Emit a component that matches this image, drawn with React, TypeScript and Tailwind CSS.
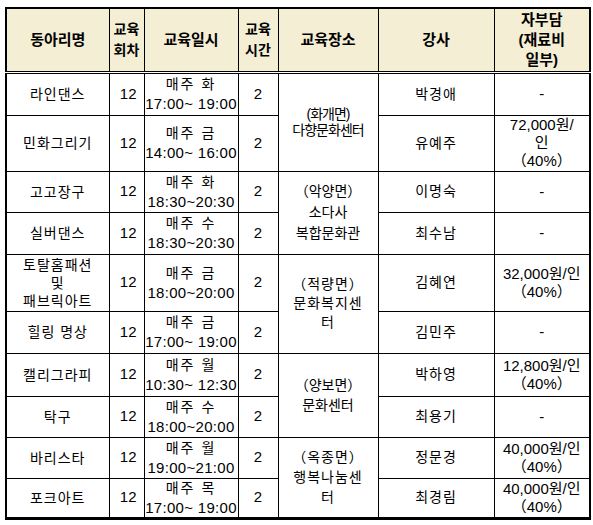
import React from 'react';

// 교육 프로그램 일정표
type Row = {
  name: string[];
  day: string;
  time: string;
  teacher: string;
  cost: string[];
  place?: { lines: string[]; cls: string };
  h: string;
};

const rows: Row[] = [
  { name: ['라인댄스'], day: '매주 화', time: '17:00~ 19:00', teacher: '박경애', cost: ['-'], h: 'h-[43px]',
    place: { lines: ['(화개면)', '다향문화센터'], cls: 'leading-[16px] tracking-[-1px]' } },
  { name: ['민화그리기'], day: '매주 금', time: '14:00~ 16:00', teacher: '유예주', cost: ['72,000원/', '인', '（40%）'], h: 'h-[56px]' },
  { name: ['고고장구'], day: '매주 화', time: '18:30~20:30', teacher: '이명숙', cost: ['-'], h: 'h-[41px]',
    place: { lines: ['（악양면）', '소다사', '복합문화관'], cls: 'leading-[21px]' } },
  { name: ['실버댄스'], day: '매주 수', time: '18:30~20:30', teacher: '최수남', cost: ['-'], h: 'h-[42px]' },
  { name: ['토탈홈패션', '및', '패브릭아트'], day: '매주 금', time: '18:00~20:00', teacher: '김혜연', cost: ['32,000원/인', '（40%）'], h: 'h-[57px]',
    place: { lines: ['（적량면）', '문화복지센', '터'], cls: 'leading-[19px] tracking-[1px]' } },
  { name: ['힐링 명상'], day: '매주 금', time: '17:00~ 19:00', teacher: '김민주', cost: ['-'], h: 'h-[42px]' },
  { name: ['캘리그라피'], day: '매주 월', time: '10:30~ 12:30', teacher: '박하영', cost: ['12,800원/인', '（40%）'], h: 'h-[43px]',
    place: { lines: ['（양보면）', '문화센터'], cls: 'leading-[20px]' } },
  { name: ['탁구'], day: '매주 수', time: '18:00~20:00', teacher: '최용기', cost: ['-'], h: 'h-[41px]' },
  { name: ['바리스타'], day: '매주 월', time: '19:00~21:00', teacher: '정문경', cost: ['40,000원/인', '（40%）'], h: 'h-[41px]',
    place: { lines: ['（옥종면）', '행복나눔센', '터'], cls: 'leading-[20px] tracking-[1px]' } },
  { name: ['포크아트'], day: '매주 목', time: '17:00~ 19:00', teacher: '최경림', cost: ['40,000원/인', '（40%）'], h: 'h-[40px]' },
];

const td = 'border border-black p-0 text-center align-middle';
const th = 'border border-black border-b-[3px] border-double p-0 text-center align-middle font-bold bg-[#f4eed5]';

export default function App() {
  return (
    <div
      className="w-[593px] h-[525px] bg-white pt-[7px] pl-[5px] text-black text-[14px]"
      style={{ fontFamily: '"Liberation Sans", "Noto Sans CJK KR", sans-serif' }}
    >
      <table className="w-[584px] table-fixed border-collapse border-2 border-b-[3px] border-black">
        <colgroup>
          <col className="w-[103px]" />
          <col className="w-[35px]" />
          <col className="w-[94px]" />
          <col className="w-[40px]" />
          <col className="w-[100px]" />
          <col className="w-[116px]" />
          <col className="w-[96px]" />
        </colgroup>
        <thead>
          <tr className="h-[64px]">
            <th className={`${th} text-[15px]`}>동아리명</th>
            <th className={`${th} leading-[21px]`}>교육<br />회차</th>
            <th className={`${th} text-[15px]`}>교육일시</th>
            <th className={`${th} leading-[21px]`}>교육<br />시간</th>
            <th className={`${th} text-[15px]`}>교육장소</th>
            <th className={`${th} text-[15px]`}>강사</th>
            <th className={`${th} leading-[20px] text-[15px]`}>자부담<br />(재료비<br />일부)</th>
          </tr>
        </thead>
        <tbody>
          {rows.map((r, i) => (
            <tr key={i} className={r.h}>
              <td className={`${td} leading-[18px] tracking-[1px]`}>
                {r.name.map((n, j) => (
                  <div key={j}>{n}</div>
                ))}
              </td>
              <td className={`${td} text-right pr-[7px] text-[15px]`}>12</td>
              <td className={`${td} leading-[19px]`}>
                <div className="tracking-[2px]">{r.day}</div>
                <div className="text-[15px] tracking-[0.3px] whitespace-nowrap">{r.time}</div>
              </td>
              <td className={`${td} text-[15px]`}>2</td>
              {r.place && (
                <td rowSpan={2} className={`${td} ${r.place.cls}`}>
                  {r.place.lines.map((l, j) => (
                    <div key={j}>{l}</div>
                  ))}
                </td>
              )}
              <td className={`${td} tracking-[1px]`}>{r.teacher}</td>
              <td className={`${td} leading-[18px] text-[15px] whitespace-nowrap`}>
                {r.cost.map((c, j) => (
                  <div key={j}>{c}</div>
                ))}
              </td>
            </tr>
          ))}
        </tbody>
      </table>
    </div>
  );
}
